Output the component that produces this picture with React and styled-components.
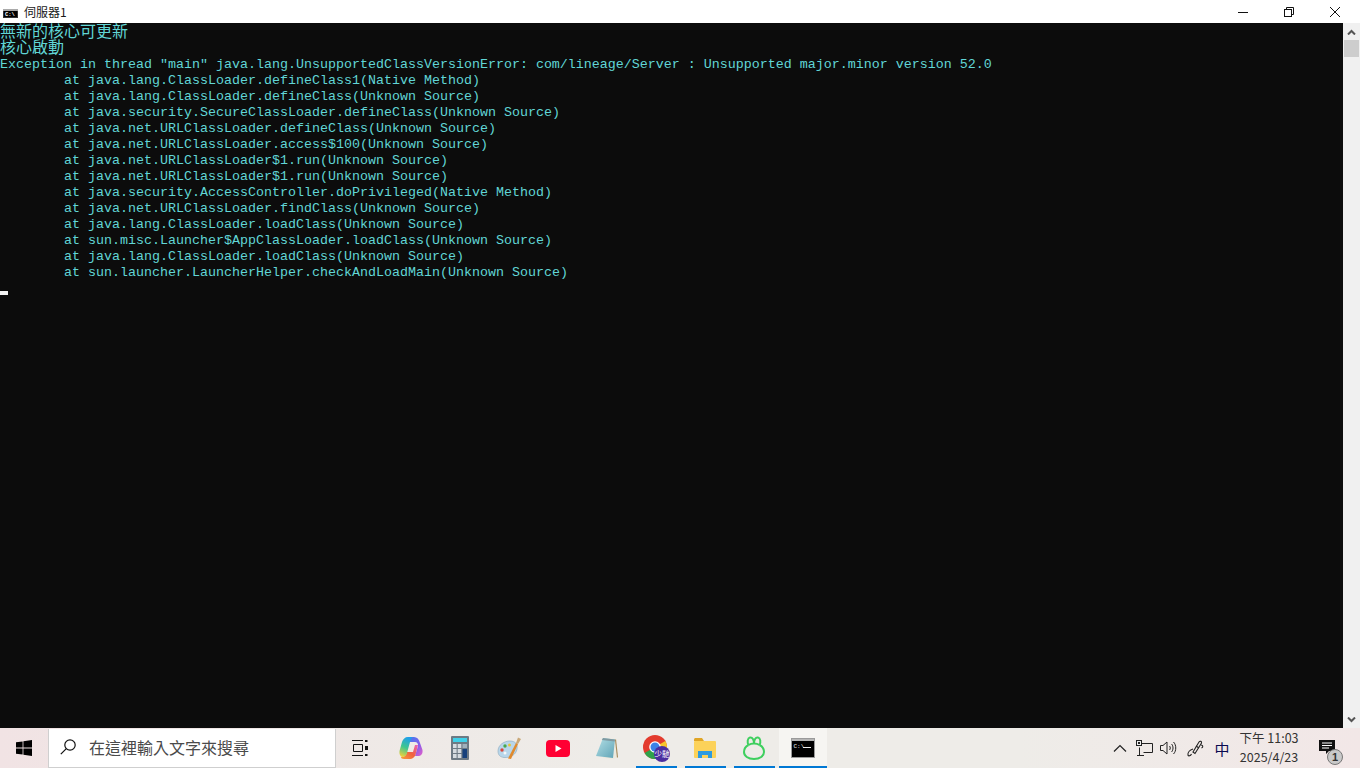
import React from "react";
import styled, { createGlobalStyle } from "styled-components";

const lines = [
  { text: "無新的核心可更新", cjk: true },
  { text: "核心啟動", cjk: true },
  { text: 'Exception in thread "main" java.lang.UnsupportedClassVersionError: com/lineage/Server : Unsupported major.minor version 52.0' },
  { text: "\tat java.lang.ClassLoader.defineClass1(Native Method)" },
  { text: "\tat java.lang.ClassLoader.defineClass(Unknown Source)" },
  { text: "\tat java.security.SecureClassLoader.defineClass(Unknown Source)" },
  { text: "\tat java.net.URLClassLoader.defineClass(Unknown Source)" },
  { text: "\tat java.net.URLClassLoader.access$100(Unknown Source)" },
  { text: "\tat java.net.URLClassLoader$1.run(Unknown Source)" },
  { text: "\tat java.net.URLClassLoader$1.run(Unknown Source)" },
  { text: "\tat java.security.AccessController.doPrivileged(Native Method)" },
  { text: "\tat java.net.URLClassLoader.findClass(Unknown Source)" },
  { text: "\tat java.lang.ClassLoader.loadClass(Unknown Source)" },
  { text: "\tat sun.misc.Launcher$AppClassLoader.loadClass(Unknown Source)" },
  { text: "\tat java.lang.ClassLoader.loadClass(Unknown Source)" },
  { text: "\tat sun.launcher.LauncherHelper.checkAndLoadMain(Unknown Source)" },
];

const GlobalStyle = createGlobalStyle`
  html, body {
    margin: 0;
    padding: 0;
    background: #0c0c0c;
    overflow: hidden;
  }
`;

const Page = styled.div`
  width: 1360px;
  height: 768px;
  display: flex;
  flex-direction: column;
  overflow: hidden;
`;

const TitleBar = styled.div`
  height: 23px;
  flex: none;
  background: #fff;
  display: flex;
  align-items: center;
  padding-left: 3px;
`;

const TitleIconBox = styled.div`
  display: flex;
  padding-top: 3px;
`;

const TitleText = styled.span`
  margin-left: 6px;
  font: 12px "Noto Sans CJK TC", "Liberation Sans", sans-serif;
  color: #1a1a1a;
`;

const WindowButtons = styled.div`
  margin-left: auto;
  padding-right: 2px;
  display: flex;
`;

const WindowButton = styled.div`
  width: 46px;
  height: 23px;
  display: flex;
  align-items: center;
  justify-content: center;
`;

const Middle = styled.div`
  flex: 1;
  display: flex;
  min-height: 0;
`;

const Terminal = styled.div`
  flex: 1;
  background: #0c0c0c;
  color: #61d6d6;
  font-family: "Liberation Mono", "DejaVu Sans Mono", monospace;
  font-size: 13.33px;
  line-height: 16px;
  padding-top: 2px;
`;

const Line = styled.div`
  height: 16px;
  white-space: pre;
  tab-size: 8;
  font-family: ${(p) => (p.$cjk ? '"Noto Sans CJK TC", sans-serif' : "inherit")};
  font-size: ${(p) => (p.$cjk ? "16px" : "inherit")};
  line-height: ${(p) => (p.$cjk ? "10px" : "16px")};
`;

const Cursor = styled.div`
  width: 8px;
  height: 4px;
  margin-top: 10px;
  background: #f2f2f2;
`;

const ScrollBar = styled.div`
  width: 17px;
  flex: none;
  background: #f0f0f0;
  display: flex;
  flex-direction: column;
  align-items: center;
`;

const ScrollArrow = styled.div`
  height: 17px;
  flex: none;
  display: flex;
  align-items: center;
  justify-content: center;
`;

const ScrollThumb = styled.div`
  width: 15px;
  height: 17px;
  background: #cdcdcd;
`;

const ScrollTrack = styled.div`
  flex: 1;
`;

const TaskBar = styled.div`
  height: 40px;
  flex: none;
  background: linear-gradient(90deg, #f1e3e4 0%, #efe8e6 22%, #eeece8 45%, #eeece8 75%, #f2e7e7 100%);
  display: flex;
  align-items: stretch;
`;

const StartButton = styled.div`
  width: 48px;
  display: flex;
  align-items: center;
  justify-content: center;
`;

const SearchBox = styled.div`
  width: 288px;
  box-sizing: border-box;
  background: #fff;
  border: 1px solid #cfcfcf;
  border-top: 0;
  display: flex;
  align-items: center;
  padding-left: 11px;
  padding-bottom: 2px;
  gap: 13px;
  font: 16px "Noto Sans CJK TC", sans-serif;
  color: #4a4a4a;
  margin-top: 1px;
`;

const TaskItems = styled.div`
  display: flex;
`;

const TaskItem = styled.div`
  width: ${(p) => (p.$active ? "48px" : "49px")};
  box-sizing: border-box;
  padding-right: 1px;
  margin-right: ${(p) => p.$gap || 0}px;
  position: relative;
  display: flex;
  align-items: center;
  justify-content: center;
  background: ${(p) => (p.$active ? "#f6f5f2" : "transparent")};
  &::after {
    content: "";
    display: ${(p) => (p.$open ? "block" : "none")};
    position: absolute;
    left: ${(p) => (p.$active ? "0" : "4px")};
    right: ${(p) => (p.$active ? "0" : "4px")};
    bottom: 0;
    height: 2px;
    background: #0078d4;
  }
`;

const Tray = styled.div`
  margin-left: auto;
  padding-right: 10px;
  display: flex;
  align-items: center;
  color: #111;
`;

const TrayIcon = styled.div`
  width: ${(p) => p.$w || 24}px;
  height: 40px;
  display: flex;
  align-items: center;
  justify-content: center;
`;

const ImeLabel = styled.div`
  width: 24px;
  text-align: center;
  font: 15px "Noto Sans CJK TC", sans-serif;
  color: #0a0a50;
`;

const Clock = styled.div`
  width: 70px;
  padding-left: 1px;
  padding-bottom: 2px;
  margin-left: -1px;
  text-align: center;
  font: 12.5px/19px "Noto Sans CJK TC", "Liberation Sans", sans-serif;
  color: #333;
`;

const Notify = styled.div`
  width: 46px;
  align-self: stretch;
  box-sizing: border-box;
  padding-bottom: 3px;
  position: relative;
  display: flex;
  align-items: center;
  justify-content: center;
`;

const NotifyBadge = styled.div`
  position: absolute;
  left: 23px;
  top: 21px;
  width: 16px;
  height: 16px;
  box-sizing: border-box;
  border-radius: 50%;
  background: #c9c9c9;
  border: 1px solid #777;
  font: bold 11px/14px "Liberation Sans", sans-serif;
  text-align: center;
  color: #333;
`;

const TitleCmdIcon = () => (
  <svg width="15" height="9" viewBox="0 0 15 9">
    <rect width="15" height="9" fill="#333" />
    <rect width="15" height="2" fill="#aaa" />
    <rect x="1" y="2" width="13" height="6" fill="#000" />
    <text x="2" y="7" fontSize="5.500" fontWeight="bold" fill="#fff" fontFamily="Liberation Mono">C:\</text>
  </svg>
);

const TaskCmdIcon = () => (
  <svg width="24" height="20" viewBox="0 0 24 20">
    <rect width="24" height="20" fill="#9a9a9a" />
    <rect x="1" y="1" width="22" height="18" fill="#000" />
    <rect x="1" y="1" width="22" height="2" fill="#b5b5b5" />
    <text x="2.500" y="9.500" fontSize="6" fill="#eee" fontFamily="Liberation Mono">C:\</text>
    <rect x="12" y="9" width="8" height="1" fill="#eee" />
  </svg>
);

const WinLogo = () => (
  <svg width="16" height="16" viewBox="0 0 16 16" fill="#000">
    <path d="M0 2.300 6.600 1.400V7.600H0zM7.400 1.300 16 0V7.600H7.400zM0 8.400H6.600V14.600L0 13.700zM7.400 8.400H16V16L7.400 14.700z" />
  </svg>
);

const SearchIcon = () => (
  <svg width="16" height="16" viewBox="0 0 16 16" fill="none" stroke="#111" strokeWidth="1.200">
    <circle cx="10" cy="6" r="5.200" />
    <path d="M6.300 9.700 .8 15.200" />
  </svg>
);

const TaskView = () => (
  <svg width="16" height="16" viewBox="0 0 16 16" fill="none" stroke="#111" strokeWidth="1">
    <path d="M0 .5h11M0 15.500h11M1.500 4.500h9v7h-9z" />
    <rect x="13" y="0" width="2.500" height="2" fill="#111" stroke="none" />
    <rect x="13" y="6" width="3" height="4" fill="#111" stroke="none" />
    <rect x="13" y="14" width="2.500" height="2" fill="#111" stroke="none" />
  </svg>
);

const Copilot = () => (
  <svg width="24" height="24" viewBox="0 0 24 24">
    <defs>
      <linearGradient id="cpA" x1="0.500" y1="0" x2="0.200" y2="1">
        <stop offset="0" stopColor="#1f9fe8" />
        <stop offset="0.5" stopColor="#3fc78e" />
        <stop offset="1" stopColor="#f6d13a" />
      </linearGradient>
      <linearGradient id="cpB" x1="0" y1="0" x2="1" y2="1">
        <stop offset="0" stopColor="#3f7cf0" />
        <stop offset="0.6" stopColor="#8a5ce8" />
        <stop offset="1" stopColor="#e860c8" />
      </linearGradient>
      <linearGradient id="cpC" x1="1" y1="0" x2="0" y2="1">
        <stop offset="0" stopColor="#e85fc0" />
        <stop offset="0.5" stopColor="#f0603f" />
        <stop offset="1" stopColor="#f6a03a" />
      </linearGradient>
    </defs>
    <path d="M11 1H15C18 1 20 3 21 7L23.500 14C24 18 22 20 19 20H16L19 10C19.500 8 18 6 16 6H10z" fill="url(#cpB)" />
    <path d="M8 16H14L16 9H19L17 17C16 21 14 23 10 23H5C3 23 2 22 2 21C5 21 7 20 8 16z" fill="url(#cpC)" />
    <path d="M9 1H14C12.500 1 11.500 3 11 6L8 17C7 20 5 21 4 21C2 21 0 19 .5 15L3 6C4 3 6 1 9 1z" fill="url(#cpA)" />
  </svg>
);

const Calculator = () => (
  <svg width="18" height="24" viewBox="0 0 18 24">
    <rect width="18" height="24" rx="1" fill="#6d7a84" />
    <rect x="2" y="2" width="14" height="4" fill="#3fd0e8" />
    {[0, 1, 2].map((r) =>
      [0, 1].map((c) => <rect key={`${r}${c}`} x={2 + c * 4.7} y={8 + r * 5} width="3.600" height="4" fill="#d5dbe0" />)
    )}
    <rect x="11.500" y="8" width="4.500" height="4" fill="#9fb0bc" />
    <rect x="11.500" y="13" width="4.500" height="9" fill="#17417c" />
  </svg>
);

const Paint = () => (
  <svg width="25" height="24" viewBox="0 0 25 24">
    <path d="M1 15C1 9 7 5 13 5c5 0 8 3 7 8-1 6-7 9-13 8.500-4-.5-6-2.500-6-6.500z" fill="#b8d6ea" stroke="#8aa8bc" strokeWidth=".6" />
    <circle cx="5" cy="14" r="1.700" fill="#d9483b" />
    <circle cx="8" cy="10" r="1.700" fill="#49a84c" />
    <circle cx="12.500" cy="9" r="1.500" fill="#e8c53a" />
    <circle cx="8" cy="17" r="1.500" fill="#f5f7f8" />
    <path d="M11 22.500 19 7l2 1-7 15z" fill="#e08a2e" />
    <path d="M19 7l2-5.500 3 1.500-3 5z" fill="#c9a878" />
  </svg>
);

const YouTube = () => (
  <svg width="24" height="17" viewBox="0 0 24 17">
    <rect width="24" height="17" rx="4" fill="#ff0033" />
    <path d="M9.500 5v7l6-3.500z" fill="#fff" />
  </svg>
);

const Notepad = () => (
  <svg width="24" height="23" viewBox="0 0 24 23">
    <defs>
      <linearGradient id="npA" x1="0" y1="0" x2="1" y2="1">
        <stop offset="0" stopColor="#b4e0e6" />
        <stop offset="1" stopColor="#5fa3b6" />
      </linearGradient>
    </defs>
    <path d="M9 1 21 2 23 20 19 22 8 21z" fill="#ece9de" />
    <path d="M21 2 23 20 22 21 20 3z" fill="#a58a5c" />
    <path d="M8 1 20 2.500 18 21 1 19z" fill="url(#npA)" />
    <path d="M8 1 20 2.500 19.700 4.500 6.800 3z" fill="#7f9aa2" />
  </svg>
);

const Chrome = () => (
  <svg width="27" height="27" viewBox="0 0 27 27">
    <circle cx="12" cy="12" r="12" fill="#e33b2e" />
    <path d="M12 12 1.600 18A12 12 0 0 0 12 24c1 0 2 0 3-.5z" fill="#2fa24a" />
    <path d="M12 12 22.400 6A12 12 0 0 1 15 23.500z" fill="#f7c52b" />
    <circle cx="12" cy="12" r="5.800" fill="#fff" />
    <circle cx="12" cy="12" r="4.500" fill="#3b82e8" />
    <circle cx="19" cy="19" r="8" fill="#4b2ea0" />
    <text x="19" y="22" fontSize="7.500" fill="#fff" textAnchor="middle" fontFamily="Noto Sans CJK TC">少馳</text>
  </svg>
);

const Explorer = () => (
  <svg width="22" height="20" viewBox="0 0 22 20">
    <path d="M0 1.500C0 .7.700 0 1.500 0H8l2 3H0z" fill="#e0a526" />
    <rect y="3" width="22" height="17" rx="1" fill="#fcd25a" />
    <path d="M4 20v-7h14v7h-4v-3H8v3z" fill="#2d9be0" />
  </svg>
);

const Navicat = () => (
  <svg width="22" height="24" viewBox="0 0 22 24" fill="none" stroke="#3ecf5e" strokeWidth="2">
    <path d="M5.500 9C2.500 10.500 1 13 1 16c0 4 4 7 10 7s10-3 10-7c0-3-1.500-5.500-4.500-7" />
    <path d="M5.500 9C4 6 4.500 2 7 1.500 9.500 1 11 4 11 7.500 11 4 12.500 1 15 1.500 17.500 2 18 6 16.500 9" />
    <path d="M5.500 9C7 8 9 7.500 11 7.500S15 8 16.500 9" />
  </svg>
);

const ChevronUp = () => (
  <svg width="14" height="8" viewBox="0 0 14 8" fill="none" stroke="#222" strokeWidth="1.200">
    <path d="M1 7.500 7 1.500l6 6" />
  </svg>
);

const NetIcon = () => (
  <svg width="17" height="16" viewBox="0 0 17 16" fill="none" stroke="#222">
    <path d="M3.500 3.500H16.500V12.500H7.500M3.500 7.500V15.500M1 15.500H8" />
    <rect x=".5" y=".5" width="5" height="5" fill="#eee" />
    <rect x="2" y="2" width="2" height="2" fill="#222" stroke="none" />
  </svg>
);

const SpeakerIcon = () => (
  <svg width="17" height="14" viewBox="0 0 17 14" fill="none" stroke="#222">
    <path d="M.5 4.500H3L7 1v12L3 9.500H.5z" />
    <path d="M9.500 5c1 1 1 3 0 4M11.500 3c2 2 2 6 0 8M13.500 1c3 3 3 9 0 12" />
  </svg>
);

const PenIcon = () => (
  <svg width="17" height="17" viewBox="0 0 17 17" fill="none" stroke="#222" strokeWidth="1.100">
    <path d="M6 12 12 2c1-1.500 3-.5 2.500 1L8 13.500z" />
    <path d="M9 6l3 2M14 5c2 0 2.500 2 .5 3M6 9c-3 1-5.500 3.500-5 6 .4 1.500 2.500 1 3.500-1" />
  </svg>
);

const NotifyIcon = () => (
  <svg width="16" height="14" viewBox="0 0 16 14">
    <path d="M0 0H16V11H10L7 14V11H0z" fill="#111" />
    <path d="M3 3h10M3 5.500h10M3 8h7" stroke="#fff" strokeWidth="1" />
  </svg>
);

const MinimizeIcon = () => (
  <svg width="10" height="10" viewBox="0 0 10 10" stroke="#111">
    <path d="M0 5.500H10" />
  </svg>
);

const RestoreIcon = () => (
  <svg width="10" height="10" viewBox="0 0 10 10" fill="none" stroke="#111">
    <rect x=".5" y="2.500" width="7" height="7" />
    <path d="M2.500 2.500V.5H9.500V7.500H7.500" />
  </svg>
);

const CloseIcon = () => (
  <svg width="10" height="10" viewBox="0 0 10 10" stroke="#111">
    <path d="M0 0 10 10M10 0 0 10" />
  </svg>
);

const ScrollUp = () => (
  <svg width="9" height="6" viewBox="0 0 9 6" fill="none" stroke="#555" strokeWidth="2">
    <path d="M1 5.500 4.500 2 8 5.500" />
  </svg>
);

const ScrollDown = () => (
  <svg width="9" height="6" viewBox="0 0 9 6" fill="none" stroke="#555" strokeWidth="2">
    <path d="M1 .5 4.500 4 8 .5" />
  </svg>
);

export default function App() {
  return (
    <Page>
      <GlobalStyle />
      <TitleBar>
        <TitleIconBox><TitleCmdIcon /></TitleIconBox>
        <TitleText>伺服器1</TitleText>
        <WindowButtons>
          <WindowButton><MinimizeIcon /></WindowButton>
          <WindowButton><RestoreIcon /></WindowButton>
          <WindowButton><CloseIcon /></WindowButton>
        </WindowButtons>
      </TitleBar>
      <Middle>
        <Terminal>
          {lines.map((l, i) => (
            <Line key={i} $cjk={l.cjk}>{l.text}</Line>
          ))}
          <Cursor />
        </Terminal>
        <ScrollBar>
          <ScrollArrow><ScrollUp /></ScrollArrow>
          <ScrollThumb />
          <ScrollTrack />
          <ScrollArrow><ScrollDown /></ScrollArrow>
        </ScrollBar>
      </Middle>
      <TaskBar>
        <StartButton><WinLogo /></StartButton>
        <SearchBox>
          <SearchIcon />
          在這裡輸入文字來搜尋
        </SearchBox>
        <TaskItems>
          <TaskItem $gap={2}><TaskView /></TaskItem>
          <TaskItem><Copilot /></TaskItem>
          <TaskItem><Calculator /></TaskItem>
          <TaskItem><Paint /></TaskItem>
          <TaskItem><YouTube /></TaskItem>
          <TaskItem><Notepad /></TaskItem>
          <TaskItem $open><Chrome /></TaskItem>
          <TaskItem $open><Explorer /></TaskItem>
          <TaskItem $open><Navicat /></TaskItem>
          <TaskItem $open $active><TaskCmdIcon /></TaskItem>
        </TaskItems>
        <Tray>
          <TrayIcon><ChevronUp /></TrayIcon>
          <TrayIcon><NetIcon /></TrayIcon>
          <TrayIcon><SpeakerIcon /></TrayIcon>
          <TrayIcon $w={30}><PenIcon /></TrayIcon>
          <ImeLabel>中</ImeLabel>
          <Clock>
            <div>下午 11:03</div>
            <div>2025/4/23</div>
          </Clock>
          <Notify>
            <NotifyIcon />
            <NotifyBadge>1</NotifyBadge>
          </Notify>
        </Tray>
      </TaskBar>
    </Page>
  );
}
